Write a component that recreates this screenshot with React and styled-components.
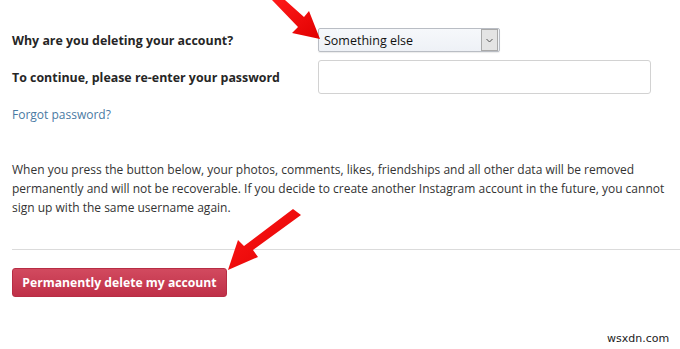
import React from "react";
import styled, { createGlobalStyle } from "styled-components";

const GlobalStyle = createGlobalStyle`
  body {
    margin: 0;
    background: #fff;
    font-family: "Open Sans", "Noto Sans", sans-serif;
    color: #262626;
  }
`;

const Page = styled.div`
  position: relative;
  width: 680px;
  height: 349px;
  overflow: hidden;
  background: #fff;
`;

const Form = styled.div`
  padding: 28px 0 0 12px;
  display: flex;
  flex-direction: column;
`;

const Row = styled.div`
  display: grid;
  grid-template-columns: 306px 1fr;
  align-items: center;
  margin-bottom: ${(p) => p.gap || 0}px;
`;

const Label = styled.label`
  font-size: 12.4px;
  font-weight: 700;
  color: #262626;
`;

const Select = styled.div`
  width: 182px;
  height: 24px;
  box-sizing: border-box;
  border: 1px solid #b9bdc4;
  border-radius: 2px;
  background: linear-gradient(#f6f8fb, #eef1f6);
  display: flex;
  align-items: center;
  font-size: 12.5px;
  color: #111;
  box-shadow: 0 1px 1px rgba(0, 0, 0, 0.08);
`;

const SelectValue = styled.span`
  flex: 1;
  padding-left: 5px;
`;

const SelectButton = styled.span`
  width: 15px;
  height: 20px;
  margin-right: 1px;
  border: 1px solid #a9a9a9;
  background: #e4e4e4;
  display: flex;
  align-items: center;
  justify-content: center;
`;

const Input = styled.div`
  width: 333px;
  height: 34px;
  box-sizing: border-box;
  border: 1px solid #d2d2d2;
  border-radius: 3px;
  background: #fff;
`;

const Link = styled.a`
  margin-top: 12px;
  font-size: 12px;
  color: #4a7aa3;
  text-decoration: none;
`;

const Notice = styled.p`
  margin: 37px 0 0;
  width: 665px;
  font-size: 12px;
  line-height: 19px;
  color: #333;
`;

const Divider = styled.hr`
  margin: 32px 0 0;
  border: 0;
  border-top: 1px solid #dbdbdb;
`;

const DangerButton = styled.button`
  margin-top: 18px;
  align-self: flex-start;
  width: 215px;
  height: 29px;
  border: 1px solid #b72d44;
  border-radius: 3px;
  background: linear-gradient(#d24a5f, #bf3048);
  color: #fff;
  font-family: "Open Sans", "Noto Sans", sans-serif;
  font-size: 12.2px;
  font-weight: 700;
  padding: 0;
`;

const Arrow = styled.svg`
  position: absolute;
  left: 0;
  top: 0;
  overflow: visible;
`;

const Watermark = styled.span`
  position: absolute;
  left: 607px;
  top: 332px;
  font-family: "DejaVu Sans", sans-serif;
  font-size: 11px;
  color: #222;
`;

export default function App() {
  return (
    <Page>
      <GlobalStyle />
      <Form>
        <Row gap={8}>
          <Label>Why are you deleting your account?</Label>
          <Select>
            <SelectValue>Something else</SelectValue>
            <SelectButton>
              <svg width="7" height="5" viewBox="0 0 7 5">
                <path d="M0.5 1 L3.5 4 L6.5 1" fill="none" stroke="#555" strokeWidth="1" />
              </svg>
            </SelectButton>
          </Select>
        </Row>
        <Row>
          <Label>To continue, please re-enter your password</Label>
          <Input />
        </Row>
        <Link href="#">Forgot password?</Link>
        <Notice>
          When you press the button below, your photos, comments, likes, friendships and all other data will be removed
          permanently and will not be recoverable. If you decide to create another Instagram account in the future, you cannot
          sign up with the same username again.
        </Notice>
        <Divider />
        <DangerButton>Permanently delete my account</DangerButton>
      </Form>

      <Arrow width="680" height="349">
        <defs>
          <linearGradient id="ag" x1="0" y1="0" x2="1" y2="1">
            <stop offset="0" stopColor="#ff1a1a" />
            <stop offset="1" stopColor="#e00000" />
          </linearGradient>
        </defs>
        <polygon points="272,0 285,0 304,17 309,11 320,39 292,33 298,27" fill="url(#ag)" />
        <polygon points="293,209 301,215 253,250 258,257 228,270 238,240 244,246" fill="url(#ag)" />
      </Arrow>
      <Watermark>wsxdn.com</Watermark>
    </Page>
  );
}
